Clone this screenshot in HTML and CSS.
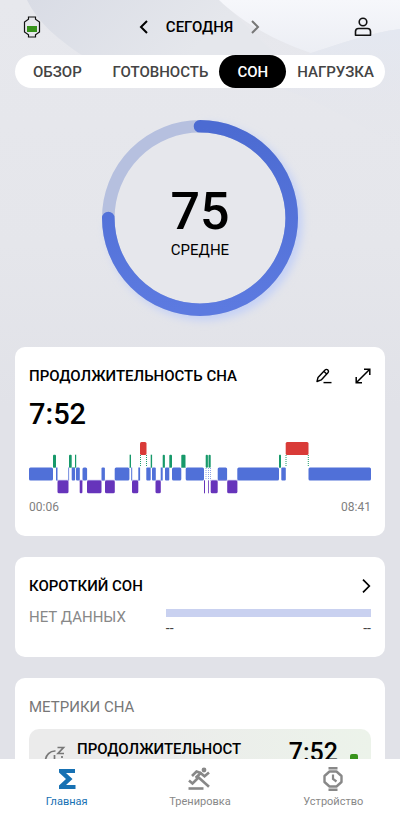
FILE: index.html
```html
<!DOCTYPE html>
<html lang="ru">
<head>
<meta charset="utf-8">
<meta name="viewport" content="width=device-width, initial-scale=1">
<title>Сон</title>
<link rel="stylesheet" href="styles.css">
</head>
<body>
<div class="app">
  <svg class="backdrop" viewBox="0 0 400 330" preserveAspectRatio="none" aria-hidden="true">
    <defs>
      <linearGradient id="veil" x1="0" y1="0" x2="1" y2="0.3">
        <stop offset="0" stop-color="#d9dce5"/>
        <stop offset="0.7" stop-color="#e5e7ec"/>
      </linearGradient>
      <linearGradient id="glow" x1="0" y1="0" x2="0" y2="1">
        <stop offset="0" stop-color="#f6f7fb"/>
        <stop offset="1" stop-color="#eceef4"/>
      </linearGradient>
      <linearGradient id="fold" x1="0" y1="0" x2="0" y2="1">
        <stop offset="0" stop-color="#e4e8f1"/>
        <stop offset="1" stop-color="#e3e4ea" stop-opacity="0"/>
      </linearGradient>
    </defs>
    <path d="M27 0C38 22 54 36 80 54L140 88H310L220 0Z" fill="url(#veil)"/>
    <path d="M219 0C240 20 268 38 311 53C340 44 368 33 400 29V0Z" fill="url(#glow)"/>
    <path d="M311 53C340 44 368 33 400 29V150C360 125 320 100 270 85Z" fill="url(#fold)"/>
  </svg>

  <header class="topbar">
    <button class="icon-btn" aria-label="Заряд устройства">
      <svg width="18" height="22" viewBox="0 0 18 22"><path d="M5.500 1h7v2.200L16.500 6v10l-4 2.800V21h-7v-2.200L1.500 16V6l4-2.800Z" fill="none" stroke="#111" stroke-width="1.200"/><path d="M4 10h10v6H4Z" fill="#38931c"/></svg>
    </button>
    <div class="day">
      <button class="icon-btn" aria-label="Предыдущий день">
        <svg width="10" height="14" viewBox="0 0 10 14"><path d="M8 1L2 7l6 6" fill="none" stroke="#000" stroke-width="2"/></svg>
      </button>
      <span class="heading">СЕГОДНЯ</span>
      <button class="icon-btn" aria-label="Следующий день">
        <svg width="10" height="14" viewBox="0 0 10 14"><path d="M2 1l6 6-6 6" fill="none" stroke="#777" stroke-width="2"/></svg>
      </button>
    </div>
    <button class="icon-btn" aria-label="Профиль">
      <svg width="18" height="20" viewBox="0 0 18 20"><g fill="none" stroke="#111" stroke-width="1.600"><circle cx="9" cy="5" r="3.800"/><path d="M1.500 18.200V14.500Q1.500 11.500 4.500 11.500H13.500Q16.500 11.500 16.500 14.500V18.200Z" stroke-linejoin="round"/></g></svg>
    </button>
  </header>

  <nav class="tabs" aria-label="Разделы">
    <button class="tab">ОБЗОР</button>
    <button class="tab">ГОТОВНОСТЬ</button>
    <button class="tab tab-active" aria-current="true">СОН</button>
    <button class="tab">НАГРУЗКА</button>
  </nav>

  <main class="content">
    <section class="score" aria-label="Оценка сна">
      <svg class="ring" viewBox="0 0 220 220" aria-hidden="true">
        <defs>
          <linearGradient id="arc" x1="0" y1="0" x2="0" y2="1">
            <stop offset="0" stop-color="#4c6bd2"/>
            <stop offset="1" stop-color="#5c7ae0"/>
          </linearGradient>
          <filter id="soft" x="-20%" y="-20%" width="140%" height="140%"><feGaussianBlur stdDeviation="4"/></filter>
        </defs>
        <path d="M114 22.300A91.700 91.700 0 1 1 22.300 114" fill="none" stroke="#c3d0f7" stroke-width="13" filter="url(#soft)"/>
        <circle cx="110" cy="110" r="91.700" fill="#e6e7ec" stroke="#b6c0df" stroke-width="12.600"/>
        <path d="M110 18.300A91.700 91.700 0 1 1 18.300 110" fill="none" stroke="url(#arc)" stroke-width="12.600" stroke-linecap="round"/>
      </svg>
      <div class="score-text">
        <strong class="score-value">75</strong>
        <span class="score-label">СРЕДНЕ</span>
      </div>
    </section>

    <section class="card card-duration">
      <div class="card-head">
        <h2 class="heading">ПРОДОЛЖИТЕЛЬНОСТЬ СНА</h2>
        <button class="icon-btn" aria-label="Изменить">
          <svg width="18" height="16" viewBox="0 0 18 16"><g fill="none" stroke="#000" stroke-width="1.400" stroke-linejoin="round"><path d="M2 13.500L3 9.500L9.800 2.200Q11.300 .7 12.800 1.900Q14.100 3.200 12.900 4.700L6.200 11.900Z"/><path d="M9 3.500l3 2.700"/><path d="M8.500 14.600H16.500"/></g></svg>
        </button>
        <button class="icon-btn" aria-label="Развернуть">
          <svg width="16" height="16" viewBox="0 0 16 16"><path d="M9 1.200H14.800V7M14.500 1.500L1.500 14.500M1.200 9V14.800H7" fill="none" stroke="#000" stroke-width="1.500"/></svg>
        </button>
      </div>
      <p class="duration">7:52</p>
      <svg class="hypnogram" viewBox="0 0 342 52" role="img" aria-label="Фазы сна">
        <g fill="none" stroke="#1c9b6b" stroke-dasharray="1 1"><path d="M111.500 13V25M117.500 13V25M257 13V25M279.300 13V25"/></g>
        <g fill="none" stroke="#8ea3e6" stroke-dasharray="1 1"><path d="M177 26V38M179.500 26V38M181.500 26V38"/></g>
        <g fill="#d93b38"><rect x="111" width="6.500" height="13" rx="1.500"/><rect x="256.700" width="22.800" height="13" rx="1.500"/></g>
        <g fill="#17996a">
          <rect x="24" y="12.700" width="3" height="13" rx="1"/><rect x="40" y="12.700" width="2.700" height="13" rx="1"/><rect x="46" y="12.700" width="1.200" height="13"/>
          <rect x="100.600" y="12.700" width="1.400" height="13"/><rect x="121.700" y="12.700" width="1.400" height="13"/><rect x="133.700" y="12.700" width="2.200" height="13" rx="1"/>
          <rect x="140.300" y="12.700" width="2.700" height="13" rx="1"/><rect x="152.300" y="12.700" width="4.200" height="13" rx="1"/><rect x="176.700" y="12.700" width="2.200" height="13" rx="1"/>
          <rect x="179.500" y="12.700" width="2.200" height="13" rx="1"/><rect x="250" y="12.700" width="2" height="13" rx=".5"/>
        </g>
        <g fill="#5070d8">
          <rect y="25.500" width="24" height="13" rx="1.500"/><rect x="27" y="25.500" width="1.500" height="13"/><rect x="39.300" y="25.500" width=".8" height="13"/>
          <rect x="42.700" y="25.500" width="3.400" height="13" rx="1"/><rect x="47" y="25.500" width="3.800" height="13" rx="1"/><rect x="53.500" y="25.500" width="4.600" height="13" rx="1.500"/>
          <rect x="72.500" y="25.500" width="3.400" height="13" rx="1"/><rect x="85.700" y="25.500" width="14.700" height="13" rx="1.500"/><rect x="102.200" y="25.500" width="1" height="13"/>
          <rect x="109.300" y="25.500" width="1.800" height="13"/><rect x="117.300" y="25.500" width="4.400" height="13" rx="1"/><rect x="123" y="25.500" width="3.800" height="13" rx="1"/>
          <rect x="131.700" y="25.500" width="2" height="13"/><rect x="136" y="25.500" width="4.300" height="13" rx="1"/><rect x="143" y="25.500" width="9.300" height="13" rx="1.500"/>
          <rect x="156.700" y="25.500" width="18.300" height="13" rx="1.500"/><rect x="188.700" y="25.500" width="9.400" height="13" rx="1.500"/><rect x="208.300" y="25.500" width="41.700" height="13" rx="1.500"/>
          <rect x="252.300" y="25.500" width="4.500" height="13" rx="1"/><rect x="279.500" y="25.500" width="62.500" height="13" rx="1.500"/>
        </g>
        <g fill="#6634bb">
          <rect x="28.500" y="38.300" width="11" height="13" rx="1.500"/><rect x="50.700" y="38.300" width="2.700" height="13" rx="1"/><rect x="58" y="38.300" width="14.500" height="13" rx="1.500"/>
          <rect x="76" y="38.300" width="9.800" height="13" rx="1.500"/><rect x="103" y="38.300" width="6.300" height="13" rx="1.500"/><rect x="126.500" y="38.300" width="5.300" height="13" rx="1.500"/>
          <rect x="175" y="38.300" width="1" height="13"/><rect x="179" y="38.300" width=".8" height="13"/><rect x="181.700" y="38.300" width="7" height="13" rx="1.500"/><rect x="198.200" y="38.300" width="10.200" height="13" rx="1.500"/>
        </g>
        <path d="M24 25.500H27M40 25.500H47M100.500 25.500H102M121.500 25.500H123M133.500 25.500H136M140 25.500H143M152 25.500H157M250 25.500H252" stroke="#5fb59b" stroke-width=".6"/>
        <path d="M28 38.300H40M50 38.300H54M58 38.300H86M103 38.300H110M126 38.300H132M181 38.300H209" stroke="#8f83dc" stroke-width=".6"/>
      </svg>
      <div class="range"><span>00:06</span><span>08:41</span></div>
    </section>

    <section class="card card-nap">
      <div class="card-head">
        <h2 class="heading">КОРОТКИЙ СОН</h2>
        <button class="icon-btn" aria-label="Открыть короткий сон">
          <svg width="10" height="14" viewBox="0 0 10 14"><path d="M2 .7L8.300 7L2 13.300" fill="none" stroke="#000" stroke-width="1.700"/></svg>
        </button>
      </div>
      <div class="nap">
        <span class="nap-empty">НЕТ ДАННЫХ</span>
        <div class="nap-chart">
          <div class="nap-bar"></div>
          <div class="nap-range"><span>--</span><span>--</span></div>
        </div>
      </div>
    </section>

    <section class="card">
      <h2 class="subheading">МЕТРИКИ СНА</h2>
      <div class="metric">
        <svg width="26" height="26" viewBox="0 0 26 26" aria-hidden="true"><g fill="none" stroke="#777" stroke-width="1.700"><path d="M12.500 5A9.500 9.500 0 1 0 21.500 14M11.500 9V15H16M19 10V12"/><path d="M14.500 1.500H20.500L15 7.500H21"/></g></svg>
        <h3 class="heading">ПРОДОЛЖИТЕЛЬНОСТ</h3>
        <span class="metric-value">7:52</span>
        <span class="metric-level"></span>
      </div>
    </section>
  </main>

  <nav class="bottom" aria-label="Главное меню">
    <a class="item item-active" href="#home">
      <svg width="24" height="24" viewBox="0 0 24 24"><path d="M4 2H20V6H11L17.500 12L11 18H20.500V22H4V18.500L11 12L4 5.500Z" fill="#1771b3"/></svg>
      <span>Главная</span>
    </a>
    <a class="item" href="#training">
      <svg width="24" height="24" viewBox="0 0 24 24"><g fill="none" stroke="#888" stroke-width="2.600"><path d="M.5 21.500H15.500"/><path d="M1 13.500L4.500 16.500L9.500 11.500L8.500 10L13.500 5.500"/><path d="M9.800 9.800L21 19.800"/><path d="M4 9L8.500 4.500L12.500 6L16.500 9.300L21 5.500"/></g><circle cx="16" cy="3" r="2.400" fill="#888"/></svg>
      <span>Тренировка</span>
    </a>
    <a class="item" href="#device">
      <svg width="24" height="24" viewBox="0 0 24 24"><g fill="none" stroke="#888" stroke-width="2.400"><path d="M7.500 1.200H16.500M7.500 22.800H16.500"/><path d="M8.500 4.500H15.500L20.500 9V15L15.500 19.500H8.500L3.500 15V9Z" stroke-linejoin="round"/><path d="M12 7.500V12L15.500 14.500" stroke-width="2.200"/></g></svg>
      <span>Устройство</span>
    </a>
  </nav>
</div>
</body>
</html>
```
FILE: styles.css
```css
* {
  box-sizing: border-box;
}

body {
  margin: 0;
  background: #e2e3e9;
  color: #000;
  font-family: Roboto, "Noto Sans", sans-serif;
  font-size: 15px;
  line-height: 20px;
}

h2,
h3,
p {
  margin: 0;
}

button {
  border: 0;
  padding: 0;
  background: none;
  color: inherit;
  font: inherit;
}

svg {
  display: block;
  flex: none;
}

.app {
  position: relative;
  isolation: isolate;
  display: flex;
  flex-direction: column;
  height: 100vh;
  overflow: hidden;
  background: linear-gradient(#e7e8ed, #e5e6eb 30%, #e1e2e8 50%);
}

.backdrop {
  position: absolute;
  inset: 0 0 auto;
  z-index: -1;
  width: 100%;
  height: 330px;
}

.topbar {
  display: grid;
  flex: none;
  grid-template-columns: 1fr auto 1fr;
  align-items: center;
  height: 55px;
  padding: 0 28px 1px 23px;
}

.topbar > :last-child {
  justify-self: end;
}

.topbar > :first-child {
  justify-self: start;
}

.day {
  display: flex;
  align-items: center;
  gap: 17px;
  padding-left: 4px;
}

.heading {
  font-size: 15px;
  font-weight: 500;
}

.tabs {
  display: flex;
  flex: none;
  gap: 1px;
  height: 33px;
  margin: 0 15px;
  padding: 0 1px 0 8px;
  border-radius: 17px;
  background: #fff;
}

.tab {
  padding: 0 10px;
  border-radius: 17px;
  color: #444;
  font-weight: 500;
}

.tab:first-child {
  margin-right: auto;
}

.tab-active {
  padding: 0 18px;
  background: #000;
  color: #fff;
}

.content {
  display: flex;
  flex: 1;
  flex-direction: column;
  gap: 21px;
  min-height: 0;
  padding: 20px 15px 0;
  overflow-y: auto;
  scrollbar-width: none;
}

.score {
  display: grid;
  flex: none;
  place-items: center;
  margin-bottom: -2px;
}

.ring,
.score-text {
  grid-area: 1 / 1;
}

.ring {
  width: 220px;
  overflow: visible;
}

.score-text {
  display: flex;
  flex-direction: column;
  align-items: center;
  padding-top: 8px;
}

.score-value {
  font-size: 52px;
  font-weight: 500;
  line-height: 56px;
}

.card {
  flex: none;
  padding: 19px 14px;
  border-radius: 10px;
  background: #fff;
}

.card-head {
  display: flex;
  gap: 22px;
  align-items: center;
}

.card-head .heading {
  flex: 1;
}

.duration {
  margin: 11px 0;
  font-size: 29px;
  font-weight: 500;
  line-height: 34px;
}

.hypnogram {
  width: 100%;
}

.range {
  display: flex;
  justify-content: space-between;
  margin-top: 3px;
  color: #808080;
  font-size: 12px;
}

.nap {
  display: flex;
  gap: 16px;
  justify-content: space-between;
  margin-top: 11px;
}

.nap-empty {
  color: #888;
}

.nap-chart {
  width: 60%;
  padding-top: 2px;
}

.nap-bar {
  height: 8px;
  margin-bottom: 1px;
  background: #c9d1f0;
}

.nap-range {
  display: flex;
  justify-content: space-between;
  font-size: 14px;
  color: #444;
}

.subheading {
  color: #777;
  font-size: 15px;
  font-weight: 400;
}

.metric {
  display: flex;
  align-items: flex-start;
  height: 80px;
  margin-top: 12px;
  padding: 10px 13px 0 14px;
  border-radius: 10px;
  background: linear-gradient(90deg, #ebebeb 30%, #ecf3ea);
}

.metric > svg {
  margin: 7px 8px 0 0;
}

.metric-value {
  margin-left: auto;
  font-size: 25px;
  font-weight: 500;
  line-height: 28px;
}

.metric-level {
  width: 8px;
  height: 30px;
  margin: 15px 0 0 12px;
  border-radius: 2px;
  background: #38931c;
}

.bottom {
  display: grid;
  flex: none;
  grid-template-columns: repeat(3, 1fr);
  height: 55px;
  padding-top: 8px;
  background: #fff;
}

.item {
  display: flex;
  flex-direction: column;
  gap: 3px;
  align-items: center;
  color: #888;
  font-size: 11px;
  line-height: 16px;
  text-decoration: none;
}

.item-active {
  color: #1771b3;
}
```
